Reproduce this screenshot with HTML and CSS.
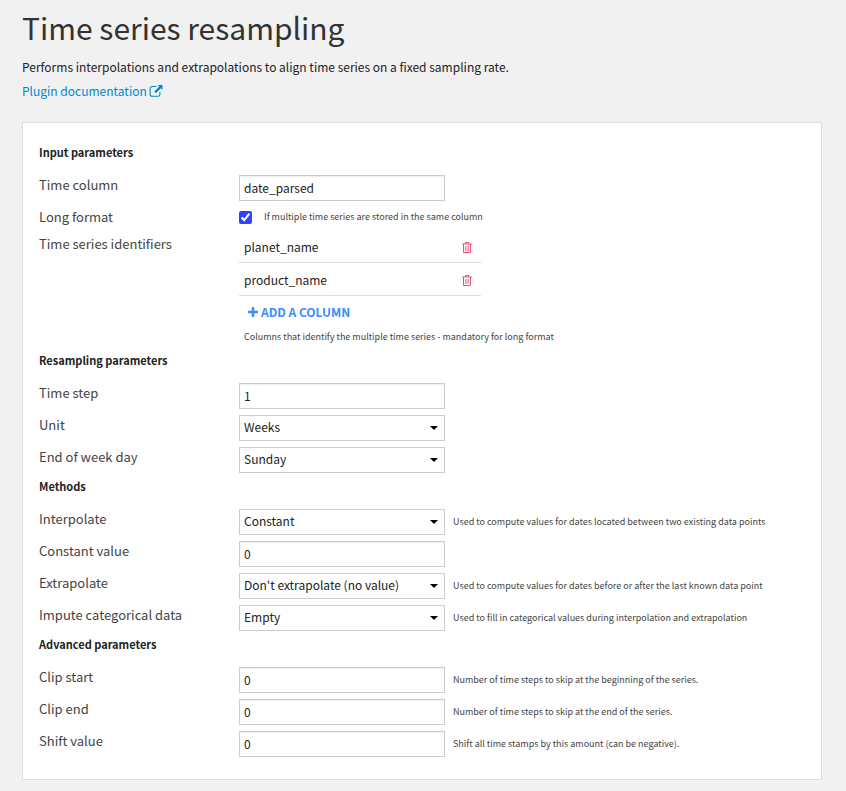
FILE: index.html
```html
<!DOCTYPE html>
<html lang="en">
<head>
    <meta charset="utf-8">
    <title>Time series resampling</title>
    <link rel="stylesheet" href="styles.css">
</head>
<body>
    <header class="recipe-header">
        <h1>Time series resampling</h1>
        <p>Performs interpolations and extrapolations to align time series on a fixed sampling rate.</p>
        <a href="#" class="doc-link">Plugin documentation
            <svg width="14" height="12" viewBox="0 0 14 12" aria-hidden="true">
                <path d="M7.5 1.5H3A1.9 1.9 0 0 0 1.1 3.4v6A1.9 1.9 0 0 0 3 11.3h6a1.9 1.9 0 0 0 1.9-1.9V7" fill="none" stroke="currentColor" stroke-width="1.1"/>
                <path d="M8.7 0H13.5v4.8l-1.6-1.6-5 5-1.6-1.6 5-5z" fill="currentColor"/>
            </svg>
        </a>
    </header>

    <form class="panel">
        <h2>Input parameters</h2>
        <div class="row">
            <label for="time-column">Time column</label>
            <div class="controls"><input type="text" id="time-column" value="date_parsed"></div>
        </div>
        <div class="row">
            <label for="long-format">Long format</label>
            <div class="controls check">
                <input type="checkbox" id="long-format" checked>
                <span class="help">If multiple time series are stored in the same column</span>
            </div>
        </div>
        <div class="row">
            <span class="label">Time series identifiers</span>
            <div class="identifiers">
                <ul>
                    <li>planet_name
                        <button type="button" class="delete" aria-label="Remove planet_name">
                            <svg width="10" height="11" viewBox="0 0 10 11" aria-hidden="true">
                                <path d="M0 2h10M3.3 2V.5h3.4V2M1.5 2v8.5h7V2" fill="none" stroke="currentColor"/>
                                <path d="M3.5 4v5M5 4v5M6.5 4v5" stroke="currentColor" stroke-width=".7"/>
                            </svg>
                        </button>
                    </li>
                    <li>product_name
                        <button type="button" class="delete" aria-label="Remove product_name">
                            <svg width="10" height="11" viewBox="0 0 10 11" aria-hidden="true">
                                <path d="M0 2h10M3.3 2V.5h3.4V2M1.5 2v8.5h7V2" fill="none" stroke="currentColor"/>
                                <path d="M3.5 4v5M5 4v5M6.5 4v5" stroke="currentColor" stroke-width=".7"/>
                            </svg>
                        </button>
                    </li>
                </ul>
                <button type="button" class="add">
                    <svg width="10" height="10" viewBox="0 0 10 10" aria-hidden="true">
                        <path d="M5 0v10M0 5h10" stroke="currentColor" stroke-width="2.4"/>
                    </svg>
                    ADD A COLUMN
                </button>
                <p class="help">Columns that identify the multiple time series - mandatory for long format</p>
            </div>
        </div>

        <h2>Resampling parameters</h2>
        <div class="row">
            <label for="time-step">Time step</label>
            <div class="controls"><input type="text" id="time-step" value="1"></div>
        </div>
        <div class="row">
            <label for="unit">Unit</label>
            <div class="controls">
                <div class="select"><select id="unit"><option>Weeks</option></select></div>
            </div>
        </div>
        <div class="row">
            <label for="week-end">End of week day</label>
            <div class="controls">
                <div class="select"><select id="week-end"><option>Sunday</option></select></div>
            </div>
        </div>

        <h2>Methods</h2>
        <div class="row">
            <label for="interpolate">Interpolate</label>
            <div class="controls">
                <div class="select"><select id="interpolate"><option>Constant</option></select></div>
                <span class="help">Used to compute values for dates located between two existing data points</span>
            </div>
        </div>
        <div class="row">
            <label for="constant">Constant value</label>
            <div class="controls"><input type="text" id="constant" value="0"></div>
        </div>
        <div class="row">
            <label for="extrapolate">Extrapolate</label>
            <div class="controls">
                <div class="select"><select id="extrapolate"><option>Don't extrapolate (no value)</option></select></div>
                <span class="help">Used to compute values for dates before or after the last known data point</span>
            </div>
        </div>
        <div class="row">
            <label for="impute">Impute categorical data</label>
            <div class="controls">
                <div class="select"><select id="impute"><option>Empty</option></select></div>
                <span class="help">Used to fill in categorical values during interpolation and extrapolation</span>
            </div>
        </div>

        <h2>Advanced parameters</h2>
        <div class="row">
            <label for="clip-start">Clip start</label>
            <div class="controls">
                <input type="text" id="clip-start" value="0">
                <span class="help">Number of time steps to skip at the beginning of the series.</span>
            </div>
        </div>
        <div class="row">
            <label for="clip-end">Clip end</label>
            <div class="controls">
                <input type="text" id="clip-end" value="0">
                <span class="help">Number of time steps to skip at the end of the series.</span>
            </div>
        </div>
        <div class="row">
            <label for="shift">Shift value</label>
            <div class="controls">
                <input type="text" id="shift" value="0">
                <span class="help">Shift all time stamps by this amount (can be negative).</span>
            </div>
        </div>
    </form>
</body>
</html>
```
FILE: styles.css
```css
* {
    box-sizing: border-box;
}
body {
    margin: 0;
    padding: 7px 24px 11px 22px;
    background-color: #f1f1f1;
    color: #222;
    font-family: "Noto Sans CJK SC", "Open Sans", sans-serif;
    font-size: 12px;
    line-height: 20px;
}
h1, h2, p, ul {
    margin: 0;
    padding: 0;
}
h1 {
    font-size: 30px;
    font-weight: normal;
    line-height: 40px;
    color: #333;
    margin-bottom: 10px;
}
.recipe-header {
    margin-bottom: 21px;
}
.doc-link {
    display: flex;
    align-items: center;
    gap: 2px;
    margin-top: 4px;
    color: #0088cc;
    text-decoration: none;
}

.panel {
    background-color: #fff;
    border: 1px solid #ddd;
    padding: 22px 16px 16px;
}
h2 {
    font-size: 11px;
    font-weight: bold;
    line-height: 14px;
    padding-bottom: 16px;
}
.row {
    display: flex;
    align-items: flex-start;
}
.row > label, .label {
    flex: 0 0 200px;
    font-size: 13px;
    color: #444;
}
.controls {
    display: flex;
    align-items: center;
    gap: 8px;
    padding-bottom: 6px;
}
.check {
    gap: 12px;
    padding-bottom: 7px;
    height: 27px;
}
input[type="text"], select {
    display: block;
    width: 206px;
    height: 26px;
    margin: 0;
    padding: 0 4px 2px;
    border: 1px solid #ccc;
    border-radius: 0;
    background-color: #fff;
    color: #222;
    font: inherit;
}
input[type="text"] {
    box-shadow: inset 0 1px 1px #eee;
}
select {
    appearance: none;
}
.select {
    position: relative;
}
/* dropdown arrow */
.select::after {
    content: "";
    position: absolute;
    right: 7px;
    top: 11px;
    border: 4px solid transparent;
    border-top-color: #000;
    border-bottom: 0;
    pointer-events: none;
}
input[type="checkbox"] {
    width: 13px;
    height: 13px;
    margin: 0;
    accent-color: #2f43ff;
}
.help {
    font-size: 9px;
    color: #444;
}

.identifiers {
    width: 342px;
}
.identifiers ul {
    width: 242px;
    list-style: none;
}
.identifiers li {
    display: flex;
    justify-content: space-between;
    align-items: center;
    padding: 7px 9px 5px 5px;
    border-bottom: 1px solid #ddd;
}
.identifiers li:first-child {
    padding-top: 3px;
}
.identifiers .help {
    padding: 5px 0 6px 5px;
}
button {
    display: flex;
    align-items: center;
    padding: 0;
    border: 0;
    background: none;
    font: inherit;
    cursor: pointer;
}
.delete {
    color: #f0506e;
}
.add {
    gap: 3px;
    margin-left: 9px;
    padding: 6px 0 0;
    color: #3b8cff;
    font-weight: bold;
}
```
